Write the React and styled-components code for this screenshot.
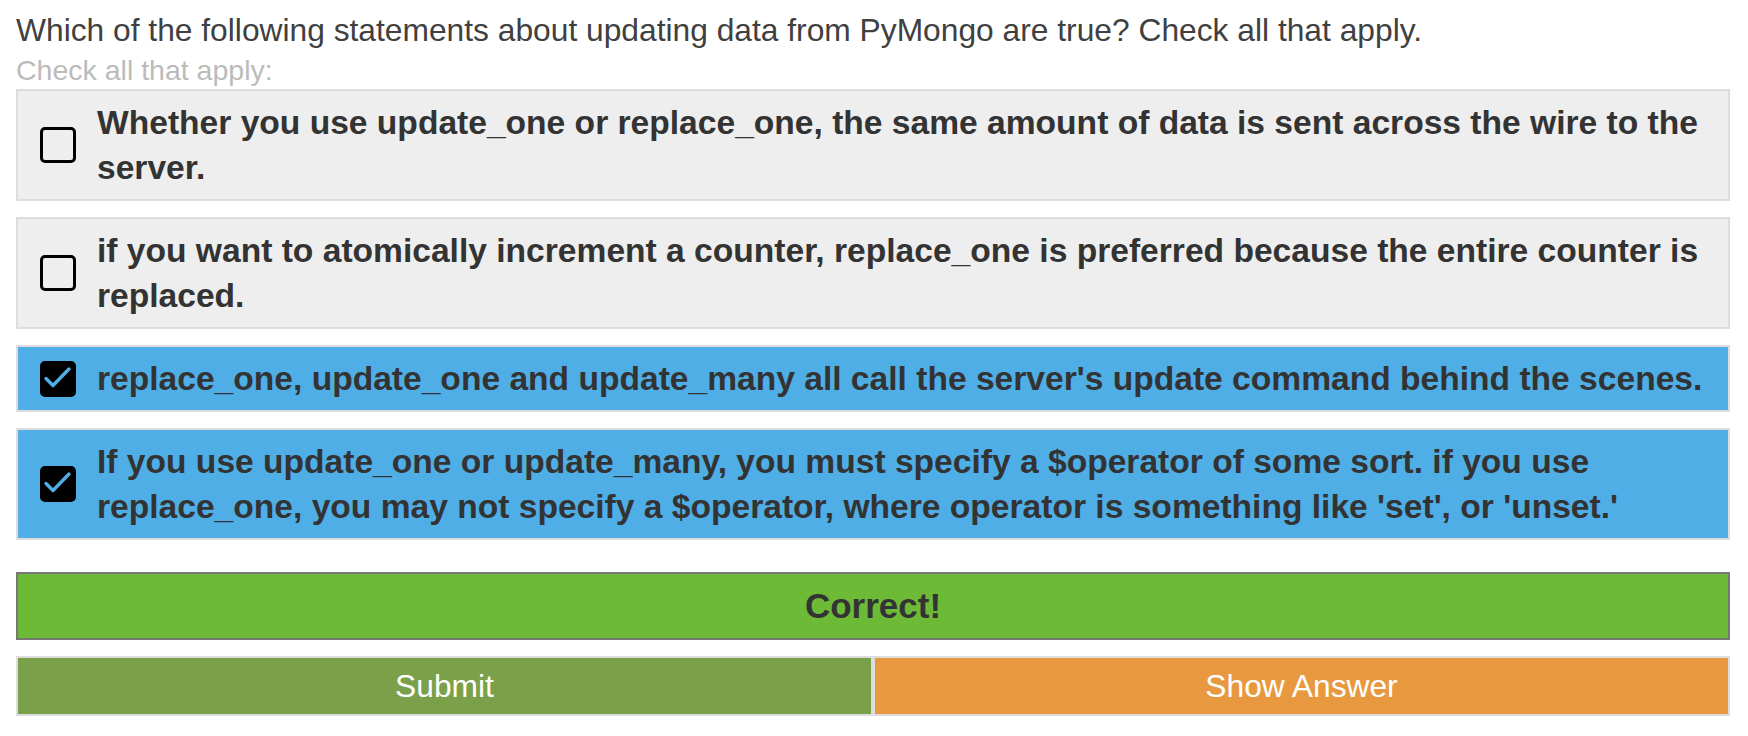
import React from 'react';
import styled, { createGlobalStyle } from 'styled-components';

const Global = createGlobalStyle`
  html, body { margin: 0; padding: 0; background: #ffffff; }
  body { font-family: "Liberation Sans", Arial, Helvetica, sans-serif; }
  * { box-sizing: border-box; }
`;

const Page = styled.div`
  padding: 15px 18px 16px 16px;
  display: flex;
  flex-direction: column;
`;

const Question = styled.div`
  font-size: 31.75px;
  line-height: 30px;
  color: #404040;
  font-weight: 300;
  white-space: nowrap;
`;

const Hint = styled.div`
  font-size: 28.5px;
  line-height: 30px;
  color: #bbbbbb;
  margin-top: 10px;
  margin-bottom: 4px;
`;

const Options = styled.div`
  display: flex;
  flex-direction: column;
  gap: 16px;
`;

const Option = styled.label`
  display: flex;
  align-items: center;
  padding: 9px 18px 9px 22px;
  border: 2px solid #dddddd;
  background: ${(p) => (p.$checked ? '#4faee6' : '#eeeeee')};
  cursor: pointer;
`;

const Box = styled.span`
  flex: none;
  width: 36px;
  height: 36px;
  border: 3.5px solid #000000;
  border-radius: 5px;
  margin-right: 21px;
  background: ${(p) => (p.$checked ? '#000000' : 'transparent')};
  display: flex;
  align-items: center;
  justify-content: center;
`;

const OptionText = styled.span`
  font-weight: 700;
  font-size: 33.6px;
  line-height: 45px;
  color: #333333;
`;

const Result = styled.div`
  margin-top: 32px;
  height: 68px;
  border: 2px solid #777777;
  background: #6dba37;
  display: flex;
  align-items: center;
  justify-content: center;
  font-weight: 700;
  font-size: 35px;
  color: #333333;
`;

const Buttons = styled.div`
  margin-top: 16px;
  display: flex;
`;

const Button = styled.button`
  flex: 1 1 0;
  height: 60px;
  border: 2px solid #dddddd;
  background: ${(p) => p.$bg};
  color: #ffffff;
  font-family: "Liberation Sans", Arial, Helvetica, sans-serif;
  font-size: 31.75px;
  padding: 0;
  cursor: pointer;
`;

const Check = () => (
  <svg width="30" height="30" viewBox="0 0 30 30">
    <path
      d="M3 14.5 L10 21.5 L26 5"
      fill="none"
      stroke="#4faee6"
      strokeWidth="3.4"
      strokeLinecap="round"
      strokeLinejoin="round"
    />
  </svg>
);

const options = [
  {
    text: 'Whether you use update_one or replace_one, the same amount of data is sent across the wire to the server.',
    checked: false,
  },
  {
    text: 'if you want to atomically increment a counter, replace_one is preferred because the entire counter is replaced.',
    checked: false,
  },
  {
    text: "replace_one, update_one and update_many all call the server's update command behind the scenes.",
    checked: true,
  },
  {
    text: "If you use update_one or update_many, you must specify a $operator of some sort. if you use replace_one, you may not specify a $operator, where operator is something like 'set', or 'unset.'",
    checked: true,
  },
];

export default function App() {
  return (
    <>
      <Global />
      <Page>
        <Question>
          Which of the following statements about updating data from PyMongo are true? Check all that apply.
        </Question>
        <Hint>Check all that apply:</Hint>
        <Options>
          {options.map((o, i) => (
            <Option key={i} $checked={o.checked}>
              <Box $checked={o.checked}>{o.checked && <Check />}</Box>
              <OptionText>{o.text}</OptionText>
            </Option>
          ))}
        </Options>
        <Result>Correct!</Result>
        <Buttons>
          <Button $bg="#7ba04a">Submit</Button>
          <Button $bg="#e8993f">Show Answer</Button>
        </Buttons>
      </Page>
    </>
  );
}
